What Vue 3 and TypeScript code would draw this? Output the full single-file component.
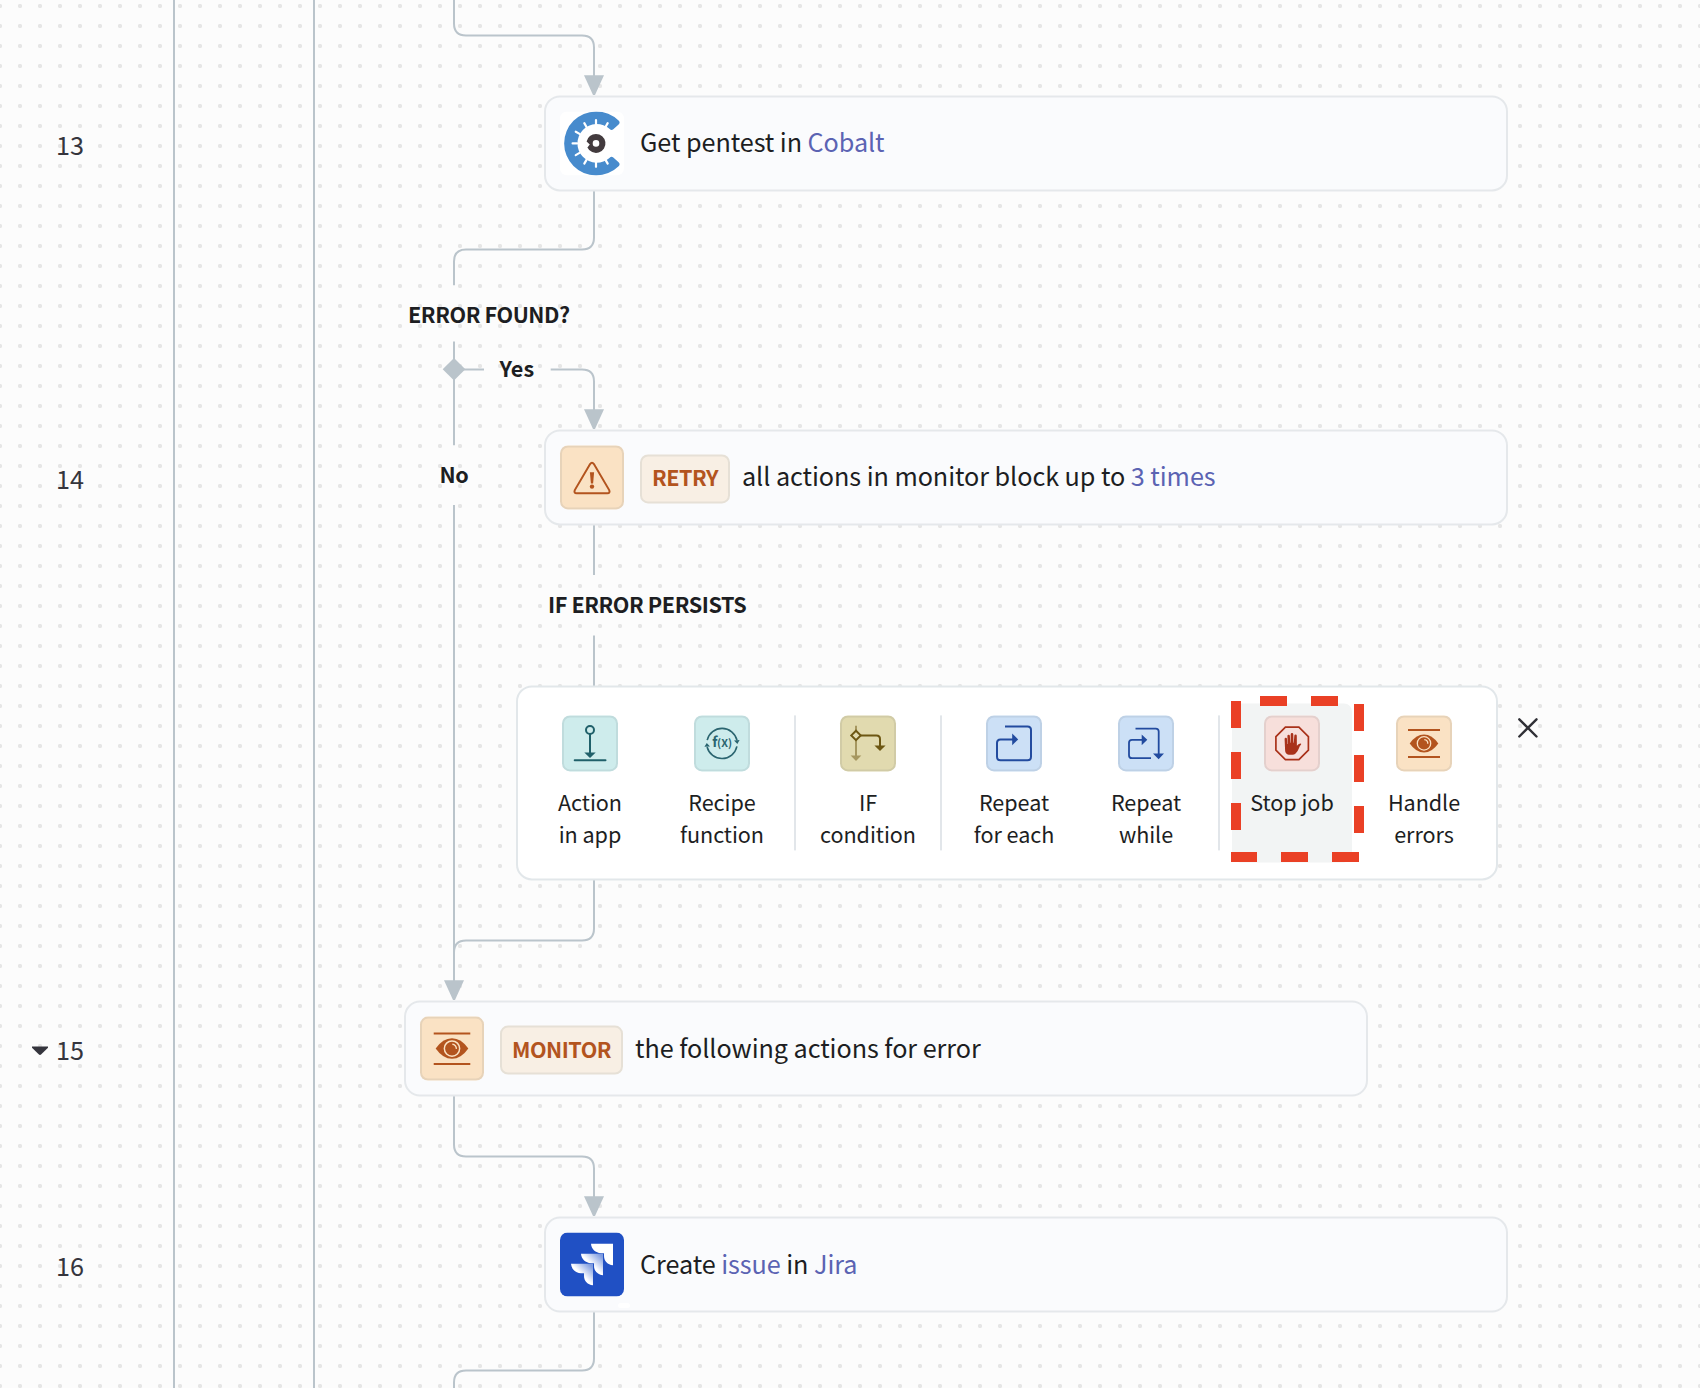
<script setup lang="ts">
type Part = { text: string; link?: boolean }
interface Step {
  id: number
  x: number
  y: number
  shift: number
  icon: 'cobalt' | 'warn' | 'eye' | 'jira'
  badge?: string
  parts: Part[]
}
interface Tool {
  icon: string
  tone: string
  lines: string[]
  divider?: boolean
  active?: boolean
}

const steps: Step[] = [
  { id: 13, x: 544, y: 95, shift: 0.4, icon: 'cobalt', parts: [{ text: 'Get pentest in ' }, { text: 'Cobalt', link: true }] },
  { id: 14, x: 544, y: 429, shift: 0.4, icon: 'warn', badge: 'RETRY', parts: [{ text: 'all actions in monitor block up to ' }, { text: '3 times', link: true }] },
  { id: 15, x: 404, y: 1000, shift: 0.55, icon: 'eye', badge: 'MONITOR', parts: [{ text: 'the following actions for error' }] },
  { id: 16, x: 544, y: 1216, shift: 0.55, icon: 'jira', parts: [{ text: 'Create ' }, { text: 'issue', link: true }, { text: ' in ' }, { text: 'Jira', link: true }] },
]

const tools: Tool[] = [
  { icon: 'action', tone: 'teal', lines: ['Action', 'in app'] },
  { icon: 'recipe', tone: 'teal', lines: ['Recipe', 'function'] },
  { icon: 'if', tone: 'olive', lines: ['IF', 'condition'], divider: true },
  { icon: 'each', tone: 'blue', lines: ['Repeat', 'for each'], divider: true },
  { icon: 'while', tone: 'blue', lines: ['Repeat', 'while'] },
  { icon: 'stop', tone: 'red', lines: ['Stop job'], divider: true, active: true },
  { icon: 'eye', tone: 'orange', lines: ['Handle', 'errors'] },
]

const arrows = [
  { x: 594, y: 75.3 },
  { x: 594, y: 409.3 },
  { x: 454, y: 980.3 },
  { x: 594, y: 1196.3 },
]

const ticks = [60, 90, 120, 150, 180, 210, 240, 270, 300]
</script>

<template>
  <main class="canvas">
    <svg class="wires" width="1700" height="1388" viewBox="0 0 1700 1388" aria-hidden="true">
      <g fill="none" stroke="#bac4cb" stroke-width="2">
        <path d="M174 0V1388M314 0V1388" />
        <path d="M454 0V23.4Q454 35.4 466 35.4H582Q594 35.4 594 47.4V80" />
        <path d="M594 190V237.4Q594 249.4 582 249.4H466Q454 249.4 454 261.4V285.3" />
        <path d="M454 341.5V445.3M454 505V985M454 369.4H484M550.7 369.4H582Q594 369.4 594 381.4V414" />
        <path d="M594 525V575M594 635.5V686" />
        <path d="M594 879V928.4Q594 940.4 582 940.4H466Q454 940.4 454 952.4" />
        <path d="M454 1095V1144.4Q454 1156.4 466 1156.4H582Q594 1156.4 594 1168.4V1200" />
        <path d="M594 1311V1358.4Q594 1370.4 582 1370.4H466Q454 1370.4 454 1382.4V1388" />
      </g>
      <g fill="#bac4cb">
        <path d="M454 358l11.3 11.3L454 380.6l-11.3-11.3z" />
        <path v-for="a in arrows" :key="a.y" :d="`M${a.x - 10} ${a.y}h20l-9 19.7h-2z`" />
      </g>
    </svg>

    <div v-for="s in steps" :key="'n' + s.id" class="num" :style="{ top: s.y + 31 + 'px' }">
      <svg v-if="s.id === 15" class="caret" width="16" height="10" viewBox="0 0 16 10">
        <path d="M0 .6H16V1.8L9.3 8.3Q8 9.5 6.7 8.3L0 1.8z" fill="#35353d" />
      </svg>
      <span>{{ s.id }}</span>
    </div>

    <h3 class="label" style="left: 408px; top: 297px">ERROR FOUND?</h3>
    <h3 class="label yes" style="left: 499.6px; top: 351px">Yes</h3>
    <h3 class="label" style="left: 439.6px; top: 457px">No</h3>
    <h3 class="label" style="left: 548px; top: 587px">IF ERROR PERSISTS</h3>

    <article
      v-for="s in steps"
      :key="s.id"
      class="step"
      :style="{ left: s.x + 'px', top: s.y + 'px', transform: `translateY(${s.shift}px)` }"
    >
      <svg v-if="s.icon === 'cobalt'" class="logo" viewBox="0 0 64 64">
        <rect width="64" height="64" rx="7" fill="#fff" />
        <path d="M58.6 9.2Q60.6 11.2 58.6 13.2L53.3 17.9Q51.4 19.5 49.7 17.7A19.3 19.3 0 1 0 49.7 46.3Q51.4 44.5 53.3 46.1L58.6 50.8Q60.6 52.8 58.6 54.8A32 32 0 1 1 58.6 9.2z" fill="#478bcd" />
        <g stroke="#fff" stroke-width="2.2" stroke-linecap="round">
          <path v-for="t in ticks" :key="t" d="M55 32H59.4" :transform="`rotate(${-t} 36 32)`" />
        </g>
        <path fill-rule="evenodd" d="M36 22.5a9.5 9.5 0 1 1-8.6 13.6l2.4-3-3.2-3A9.5 9.5 0 0 1 36 22.5zM36 28.7a3.3 3.3 0 1 0 0 6.6 3.3 3.3 0 0 0 0-6.6z" fill="#433b3e" />
      </svg>
      <svg v-else-if="s.icon === 'jira'" class="logo" viewBox="0 0 64 64">
        <defs>
          <linearGradient id="jg" x1="1" y1="0.05" x2="0.4" y2="0.65">
            <stop offset="0.1" stop-color="#7f9ce0" />
            <stop offset="0.8" stop-color="#fff" />
          </linearGradient>
          <path id="jp" d="M31 11.3H53V32.7C47.6 32.2 44 28.4 44 23.4V20.6H41C35.6 20.6 31.4 16.8 31 11.3z" />
        </defs>
        <rect width="64" height="64" rx="7.5" fill="#2050c4" />
        <use href="#jp" fill="#fff" />
        <use href="#jp" fill="url(#jg)" transform="translate(-10 10)" />
        <use href="#jp" fill="url(#jg)" transform="translate(-20 20)" />
      </svg>
      <span v-else class="tile orange">
        <svg v-if="s.icon === 'warn'" viewBox="0 0 64 64" fill="none" stroke="#b3541e" stroke-width="2">
          <path d="M30.1 18.7Q32 15.8 33.9 18.7L49.2 44.7Q50.4 47.7 47.3 47.9H16.7Q13.6 47.7 14.8 44.7z" />
          <path d="M29.9 26.8h4.2l-1 11.4h-2.2z" fill="#b3541e" stroke="none" />
          <circle cx="32" cy="41.2" r="2.2" fill="#b3541e" stroke="none" />
        </svg>
        <svg v-else viewBox="0 0 56 56" fill="none" stroke="#b3541e" stroke-width="1.8">
          <path d="M12 14.8H44M12 41.5H44" />
          <path d="M13.7 28Q20 19 28 19T42.3 28Q36 37 28 37T13.7 28z" fill="#b3541e" stroke="none" />
          <circle cx="28" cy="28" r="6.7" stroke="#fae2c4" stroke-width="1.3" />
          <path d="M28.3 24.3A3.9 3.9 0 0 1 31.8 28.3" stroke="#fae2c4" stroke-width="1.3" />
        </svg>
      </span>
      <b v-if="s.badge" class="badge">{{ s.badge }}</b>
      <p class="title" :class="{ after: s.badge }"><span v-for="(p, i) in s.parts" :key="i" :class="{ link: p.link }">{{ p.text }}</span></p>
    </article>
    <i class="speck"></i>

    <section class="picker">
      <template v-for="t in tools" :key="t.lines.join()">
        <i v-if="t.divider" class="divider"></i>
        <div class="tool" :class="{ active: t.active }">
          <span class="tile small" :class="t.tone">
            <svg v-if="t.icon === 'action'" viewBox="0 0 56 56" fill="none" stroke="#20606a" stroke-width="2">
              <circle cx="28" cy="14.6" r="4" />
              <path d="M28 18.6V38M12.7 44.8H43.5" stroke-linecap="round" />
              <path d="M22.3 37H33.7L28 42.6z" fill="#20606a" stroke="none" />
            </svg>
            <svg v-else-if="t.icon === 'recipe'" viewBox="0 0 56 56" fill="none" stroke="#2b6570" stroke-width="1.6">
              <path d="M13.2 24.7A15.3 15.3 0 0 1 43 25M42.9 31A15.3 15.3 0 0 1 13.1 31.6" />
              <path d="M40 25.2L45.6 24.6 43.4 28.6zM10.4 31.4L12.8 27.6 16 31z" fill="#2b6570" stroke="none" />
              <text x="18.2" y="32" class="fx">f<tspan class="fx-arg" dx="-.3">(X)</tspan></text>
            </svg>
            <svg v-else-if="t.icon === 'if'" viewBox="0 0 56 56" fill="none" stroke="#6d5713" stroke-width="2">
              <g opacity=".5">
                <path d="M16 10.3V15M16 25V41" />
                <path d="M10.7 40H21.3L16 45.6z" fill="#6d5713" stroke="none" />
              </g>
              <path d="M16 15.3L20.7 20 16 24.7 11.3 20z" />
              <path d="M20.7 20H36.5Q40 20 40 23.5V31" />
              <path d="M34.4 30H45.6L40 35.7z" fill="#6d5713" stroke="none" />
            </svg>
            <svg v-else-if="t.icon === 'each'" viewBox="0 0 56 56" fill="none" stroke="#224b9f" stroke-width="2">
              <path d="M19 11.2H41.5Q45 11.2 45 14.7V41.3Q45 44.8 41.5 44.8H14.5Q11 44.8 11 41.3V27.5Q11 24 14.5 24H27" />
              <path d="M26.2 18L32.2 24 26.2 29.8z" fill="#224b9f" stroke="none" />
            </svg>
            <svg v-else-if="t.icon === 'while'" viewBox="0 0 56 56" fill="none" stroke="#224b9f" stroke-width="1.8">
              <path d="M17.5 13.2H37.7Q40.7 13.2 40.7 16.2V39M33 42.8H14Q11 42.8 11 39.8V27.4Q11 24.4 14 24.4H24" />
              <path d="M23.7 19L29.3 24.4 23.7 29.8zM35 38H46L40.6 43.8z" fill="#224b9f" stroke="none" />
            </svg>
            <svg v-else-if="t.icon === 'stop'" viewBox="0 0 56 56" fill="none" stroke="#a9321a" stroke-width="1.7">
              <path d="M21.4 11.8H34.9L44.4 21.3V34.8L34.9 44.3H21.4L11.9 34.8V21.3z" />
              <path d="M20.6 23.6q0-1.3 1.2-1.3t1.2 1.3l.3 5h.4L23.4 20.6q0-1.3 1.2-1.3t1.3 1.3L26.2 27.4h.4L26.7 19q0-1.3 1.3-1.3t1.3 1.3L29.4 27.4h.4L30.3 20.4q.1-1.3 1.3-1.3t1.2 1.3L32.9 30.4q1.4-2.1 3.4-2.4 1.3 0 .8 1.1-1.5 1.6-2.4 4.2-1.1 3-3.1 4.9-1.3 1.2-3.2 1.2h-3.7q-3.5-.6-3.6-4.2z" fill="#a9321a" stroke="none" />
            </svg>
            <svg v-else viewBox="0 0 56 56" fill="none" stroke="#b3541e" stroke-width="1.8">
              <path d="M12 14.6H44M12 41.6H44" />
              <path d="M13.7 28Q20 19 28 19T42.3 28Q36 37 28 37T13.7 28z" fill="#b3541e" stroke="none" />
              <circle cx="28" cy="28" r="6.7" stroke="#fae2c4" stroke-width="1.3" />
              <path d="M28.3 24.3A3.9 3.9 0 0 1 31.8 28.3" stroke="#fae2c4" stroke-width="1.3" />
            </svg>
          </span>
          <span class="caption"><span v-for="l in t.lines" :key="l">{{ l }}</span></span>
        </div>
      </template>
    </section>

    <svg class="marker" width="133" height="166" viewBox="0 0 133 166" aria-hidden="true">
      <path d="M29 0h27v10h-27zM80 0h27v10h-27zM0 5h10v27h-10zM0 56h10v27h-10zM0 107h10v27h-10zM0 156h26v10h-26zM50 156h27v10h-27zM101 156h27v10h-27zM123 8h10v27h-10zM123 59h10v27h-10zM123 110h10v27h-10z" fill="#ea4025" />
    </svg>

    <svg class="close" width="20" height="20" viewBox="0 0 20 20">
      <path d="M1.3 1.3L18.5 18.5M18.5 1.3L1.3 18.5" stroke="#303036" stroke-width="2.4" stroke-linecap="round" />
    </svg>
  </main>
</template>

<style>
body {
  background: #fcfcfc;
}
</style>

<style scoped>
.canvas {
  position: relative;
  width: 1700px;
  height: 1388px;
  overflow: hidden;
  font-family: "Noto Sans CJK SC", "Noto Sans", sans-serif;
  color: #1d1e22;
  background: radial-gradient(circle at 10px 10px, #e6e6e6 1.8px, rgba(230, 230, 230, 0) 2.5px) -10px -4px / 20px 20px #fcfcfc;
}
.wires {
  position: absolute;
  left: 0;
  top: 0;
}
.num {
  position: absolute;
  left: 32px;
  display: flex;
  width: 54px;
  height: 36px;
  align-items: center;
  justify-content: flex-end;
  gap: 8px;
  font-size: 25.2px;
  line-height: 36px;
  color: #35353d;
}
.caret {
  margin-top: 3px;
}
.num span {
  width: 30px;
}
.label {
  position: absolute;
  margin: 0;
  font-size: 21.6px;
  font-weight: 600;
  line-height: 34px;
  letter-spacing: -0.42px;
  white-space: nowrap;
}
.yes {
  letter-spacing: 0;
}
.step {
  position: absolute;
  box-sizing: border-box;
  display: flex;
  align-items: center;
  width: 964px;
  height: 96px;
  padding: 0 14px;
  border: 2px solid #e5e8eb;
  border-radius: 16px;
  background: #fafbfd;
}
.logo {
  flex: none;
  width: 64px;
  height: 64px;
}
.tile {
  flex: none;
  box-sizing: border-box;
  width: 64px;
  height: 64px;
  border-radius: 8px;
  box-shadow: inset 0 0 0 2px rgba(70, 80, 90, 0.1);
}
.tile svg {
  display: block;
  width: 100%;
  height: 100%;
}
.small {
  width: 56px;
  height: 56px;
}
.teal { background: #ceecec; }
.olive { background: #e1daaf; }
.blue { background: #cce0f6; }
.red { background: #f7dfdb; }
.orange { background: #fae2c4; }
.badge {
  box-sizing: border-box;
  height: 49px;
  margin: 3px 0 0 16px;
  padding: 0 10px;
  border: 2px solid #e6e0d6;
  border-radius: 8px;
  background: #f8efe4;
  color: #b3541e;
  font-size: 21.6px;
  font-weight: 600;
  line-height: 41px;
  letter-spacing: -0.5px;
}
.title {
  margin: -4px 0 0 16px;
  font-size: 25.2px;
  line-height: 40px;
  letter-spacing: -0.06px;
  white-space: pre;
}
.title.after {
  margin-left: 12px;
}
.link {
  color: #5b63b3;
}
.speck {
  position: absolute;
  left: 618px;
  top: 1303px;
  width: 12px;
  height: 5px;
  border-radius: 3px;
  background: #fff;
}
.picker {
  position: absolute;
  left: 516px;
  top: 685px;
  transform: translateY(0.4px);
  box-sizing: border-box;
  display: flex;
  gap: 12px;
  width: 982px;
  height: 195px;
  padding: 16px 12px;
  border: 2px solid #e2e7ea;
  border-radius: 16px;
  background: #fff;
}
.divider {
  flex: none;
  width: 2px;
  margin: 12px 0;
  background: #e2e6ea;
}
.tool {
  flex: none;
  display: flex;
  flex-direction: column;
  align-items: center;
  width: 120px;
  box-sizing: border-box;
  padding-top: 12px;
  border-radius: 8px;
}
.active {
  background: #f2f4f4;
}
.caption {
  display: flex;
  flex-direction: column;
  align-items: center;
  margin-top: 15px;
  font-size: 21.6px;
  line-height: 32px;
  letter-spacing: -0.05px;
  white-space: nowrap;
}
.fx {
  font-size: 14px;
  font-weight: 700;
  fill: #2b6570;
  stroke: none;
}
.fx-arg {
  font-size: 10.8px;
}
.marker {
  position: absolute;
  left: 1231px;
  top: 696px;
}
.close {
  position: absolute;
  left: 1518px;
  top: 718px;
}
</style>
